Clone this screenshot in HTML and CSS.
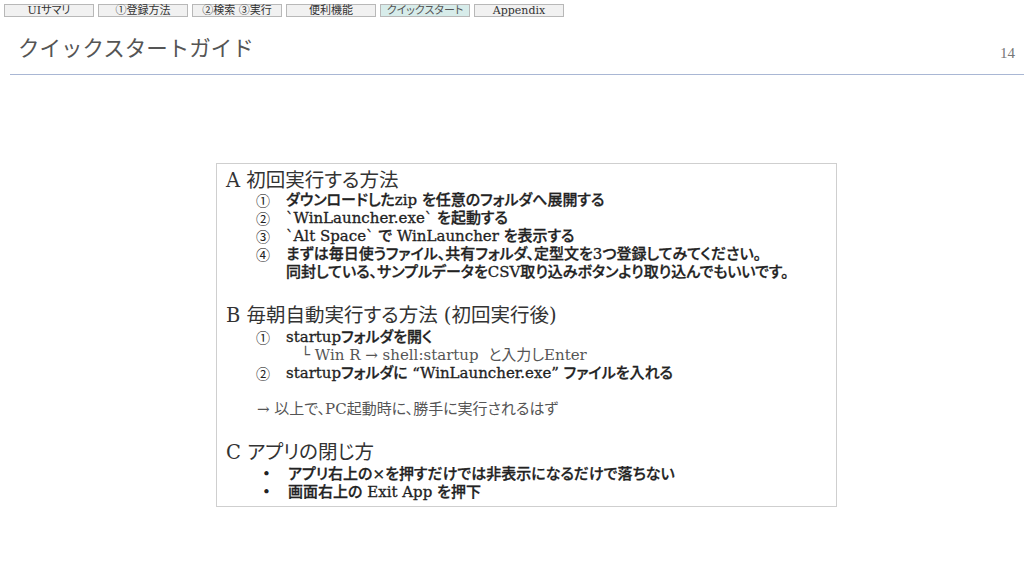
FILE: index.html
```html
<!DOCTYPE html>
<html lang="ja">

<head>
    <meta charset="UTF-8">
    <title>クイックスタートガイド</title>
    <link rel="stylesheet" href="styles.css">
</head>

<body>
    <nav class="tabs">
        <span class="tab">UIサマリ</span>
        <span class="tab">①登録方法</span>
        <span class="tab">②検索 ③実行</span>
        <span class="tab">便利機能</span>
        <span class="tab activo">クイックスタート</span>
        <span class="tab">Appendix</span>
    </nav>

    <header class="cabecera">
        <h1>クイックスタートガイド</h1>
        <span class="pagina">14</span>
    </header>

    <div class="caja">
        <h2>A 初回実行する方法</h2>
        <div class="paso"><span class="num">①</span>ダウンロードしたzip を任意のフォルダへ展開する</div>
        <div class="paso"><span class="num">②</span>`WinLauncher.exe` を起動する</div>
        <div class="paso"><span class="num">③</span>`Alt Space` で WinLauncher を表示する</div>
        <div class="paso"><span class="num">④</span>まずは毎日使うファイル、共有フォルダ、定型文を3つ登録してみてください。</div>
        <div class="paso"><span class="num"></span>同封している、サンプルデータをCSV取り込みボタンより取り込んでもいいです。</div>

        <h2 class="seccion">B 毎朝自動実行する方法 (初回実行後)</h2>
        <div class="paso"><span class="num">①</span>startupフォルダを開く</div>
        <div class="sub">└ Win R → shell:startup&nbsp; と入力しEnter</div>
        <div class="paso"><span class="num">②</span>startupフォルダに “WinLauncher.exe” ファイルを入れる</div>
        <div class="nota">→ 以上で、PC起動時に、勝手に実行されるはず</div>

        <h2 class="seccion">C アプリの閉じ方</h2>
        <div class="paso punto"><span class="num">•</span>アプリ右上の×を押すだけでは非表示になるだけで落ちない</div>
        <div class="paso punto"><span class="num">•</span>画面右上の Exit App を押下</div>
    </div>
</body>

</html>
```

FILE: styles.css
```css
body {
    margin: 0;
    background: #fff;
    font-family: "DejaVu Serif", "Noto Sans CJK JP", serif;
    font-feature-settings: "palt";
    color: #333;
}

.tabs {
    display: flex;
    gap: 4px;
    padding: 4px 0 0 4px;
}

.tab {
    width: 90px;
    height: 13px;
    box-sizing: border-box;
    border: 1px solid #b8b8b8;
    background-color: #f1f1f1;
    font-size: 11px;
    line-height: 11px;
    text-align: center;
    color: #333;
}

.tab.activo {
    background-color: #d7ecea;
    color: #555;
}

.cabecera {
    display: flex;
    justify-content: space-between;
    align-items: flex-end;
    height: 57px;
    margin-left: 10px;
    padding: 0 9px 0 8px;
    border-bottom: 1px solid #a9b7d4;
}

h1 {
    margin: 0 0 14px 0;
    font-family: "Noto Sans CJK JP", sans-serif;
    font-feature-settings: normal;
    font-size: 21.5px;
    font-weight: normal;
    line-height: 26px;
    color: #555;
}

.pagina {
    margin-bottom: 12px;
    font-family: "Liberation Serif", serif;
    font-size: 15px;
    color: #777;
}

.caja {
    width: 621px;
    box-sizing: border-box;
    margin: 88px 0 0 216px;
    padding: 7px 9px 5px 9px;
    border: 1px solid #cfcfcf;
}

h2 {
    margin: 0;
    font-size: 19.5px;
    font-weight: normal;
    line-height: 20px;
    color: #333;
}

h2.seccion {
    margin-top: 25px;
    margin-bottom: 2px;
}

.paso {
    display: flex;
    align-items: center;
    height: 18px;
    padding-left: 30px;
    font-size: 15px;
    font-weight: 500;
    line-height: 18px;
    color: #222;
    -webkit-text-stroke: 0.3px #222;
}

.num {
    width: 30px;
    flex-shrink: 0;
    font-family: "Noto Sans CJK JP", sans-serif;
    font-size: 14px;
    font-weight: normal;
    line-height: 16px;
    -webkit-text-stroke: 0;
}

.punto {
    padding-left: 36px;
}

.punto .num {
    width: 26px;
    font-family: "DejaVu Serif", serif;
    font-size: 15px;
}

.sub {
    padding-left: 75px;
    font-size: 15px;
    line-height: 18px;
    color: #555;
}

.nota {
    margin-top: 18px;
    padding-left: 31px;
    font-size: 15px;
    line-height: 18px;
    color: #555;
}
```
